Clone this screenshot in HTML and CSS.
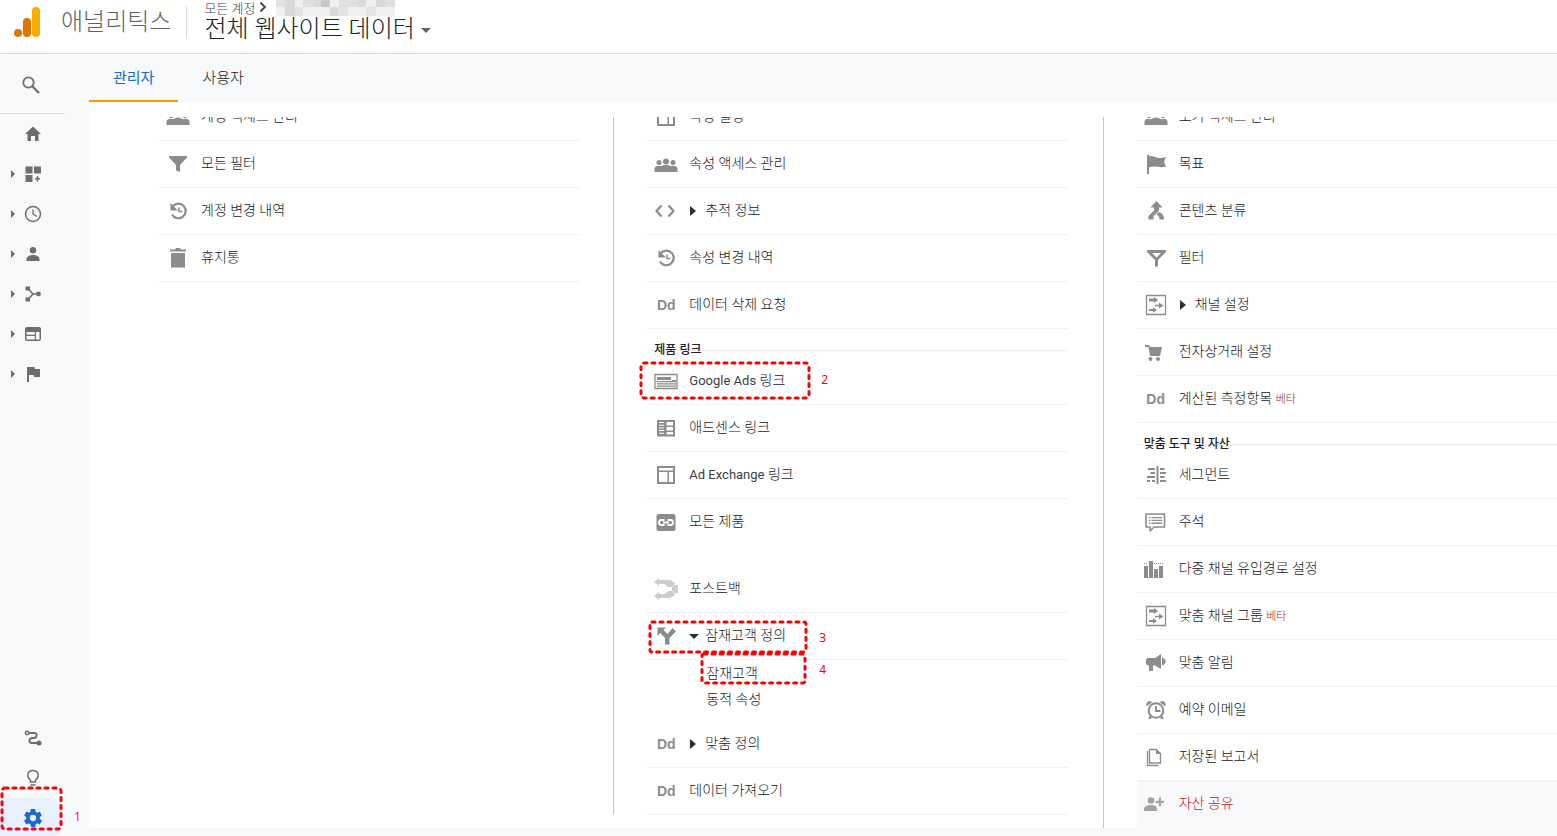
FILE: index.html
```html
<!DOCTYPE html>
<html lang="ko">
<head>
  <meta charset="UTF-8">
  <title>애널리틱스</title>
  <link rel="stylesheet" href="styles.css">
</head>
<body>

  <svg class="sprite" aria-hidden="true">
    <symbol id="i-people" viewBox="0 0 24 24"><circle cx="12" cy="9.500" r="3"/><circle cx="5" cy="10.500" r="2.500"/><circle cx="19" cy="10.500" r="2.500"/><path d="M.5 20v-3c0-2 2-3.200 4-3.200 1 0 2 .2 2.500.5 1-.8 3-1.300 5-1.300s4 .5 5 1.300c.5-.3 1.500-.5 2.500-.5 2 0 4 1.200 4 3.200v3z"/></symbol>
    <symbol id="i-layout" viewBox="0 0 24 24"><path d="M3 3h18v18H3zm2 2v2.500h14V5zm0 4v10h8.500V9zm10 0v10h4V9z" fill-rule="evenodd"/></symbol>
    <symbol id="i-filter" viewBox="0 0 24 24"><path d="M3 4h18v1.500l-7 7.500v7l-4-1.500V13L3 5.500z"/></symbol>
    <symbol id="i-filter-o" viewBox="0 0 24 24"><path d="M3 4h19v2l-8 8v6.500h-3V14L3 6zm5 3 4.500 4.500L17 7z" fill-rule="evenodd"/></symbol>
    <symbol id="i-history" viewBox="0 0 24 24"><path d="M7 7a7.300 7.300 0 1 1-1 8.500" fill="none" stroke="currentColor" stroke-width="2.200"/><path d="M4.500 4v7.500H12z"/><path d="M13 8.500v4h3.500" fill="none" stroke="currentColor" stroke-width="1.500"/></symbol>
    <symbol id="i-trash" viewBox="0 0 24 24"><path d="M4 3.500h5l1-1.500h4l1 1.500h5v2H4zM5 7h14v14.500H5z"/></symbol>
    <symbol id="i-code" viewBox="0 0 24 24"><path d="m7.500 6.500-5 5.500 5 5.500M14.500 6.500l5 5.500-5 5.500" fill="none" stroke="currentColor" stroke-width="2.200"/></symbol>
    <symbol id="i-ads" viewBox="0 0 24 24"><path d="M1 5.500h22v14H1z" fill="none" stroke="currentColor" stroke-width="1.300"/><path d="M3 8h14v3H3zm15 3h4v1h-4zM3 12h19v1.200H3zm0 2.300h19v1.200H3zm0 2.300h19v1.200H3z"/></symbol>
    <symbol id="i-adsense" viewBox="0 0 24 24"><path d="M3 4h18v16.500H3zm9.500 2v3.500H19V6zm0 5v3.500H19V11zm0 5v2.500H19V16zM5 6v1h5V6zm0 2.700v1h5v-1zm0 2.700v1h5v-1zm0 2.700v1h5v-1zm0 2.700v1h5v-1z" fill-rule="evenodd"/></symbol>
    <symbol id="i-link" viewBox="0 0 24 24"><rect x="2.500" y="4" width="19" height="17" rx="2"/><path d="M10.500 10H7.500a2.500 2.500 0 0 0 0 5h3M13.500 10h3a2.500 2.500 0 0 1 0 5h-3M9 12.500h6" fill="none" stroke="#fff" stroke-width="1.800"/></symbol>
    <symbol id="i-postback" viewBox="0 0 24 24"><path d="M0 5 5 1v2h11l5 3-3 4h-4l-3-3H5v2zM0 19l5-4v2h6l3-3h4l3 4-5 3H5v2z"/><circle cx="22" cy="12" r="4.200"/></symbol>
    <symbol id="i-split" viewBox="0 0 24 24"><path d="M3.500 3.500h8.500L9.500 6l4 4 5-6 3.500 3.300-6.500 6.700v6.500h-4.500V14L6.300 9 3.500 12z"/></symbol>
    <symbol id="i-merge" viewBox="0 0 24 24"><path d="m12.500 2 6 6.500H15v3.500l-5.500 5v3.500h-5V17l5.500-5.500v-3H6.500zM15 13c3 1 5 3 5 7.500h-4.500c0-2.500-1-4-3-5z"/></symbol>
    <symbol id="i-flag" viewBox="0 0 24 24"><path d="M3 3l2-.5v2c4-1.500 7 2 11 1.500 2 0 4-.5 6-1l-2 5 2 4.500c-6 2-11-1.500-17 1v6.500H3z"/></symbol>
    <symbol id="i-channel" viewBox="0 0 24 24"><path d="M2.500 2.500h19v19h-19z" fill="none" stroke="currentColor" stroke-width="1.300"/><path d="M5 5.500h5V4l4 3-4 3V8.500H5zM11 11.700h4V9.500l4.500 3-4.500 3v-2.200h-4zM5 16h4v-1.800l4 2.800-4 2.800v-1.800H5z"/></symbol>
    <symbol id="i-cart" viewBox="0 0 24 24"><path d="M1 5h4l1 2h12l-2 9H6L4.500 7H1z"/><circle cx="6.500" cy="19" r="2"/><circle cx="14" cy="19" r="2"/></symbol>
    <symbol id="i-segment" viewBox="0 0 24 24"><path d="M4 6h7M6.500 10H11M3 14h8M3 18h3M16 6h4.500M16 10h6M16 14h4.500M16 18h6M8 18h3" fill="none" stroke="currentColor" stroke-width="1.800"/><path d="M12.500 3h2v18h-2z"/></symbol>
    <symbol id="i-note" viewBox="0 0 24 24"><path d="M2 4h18.500v13H10l-4 4v-4H2z" fill="none" stroke="currentColor" stroke-width="1.600" stroke-linejoin="round"/><path d="M5 7h1.500v1.300H5zm2.500 0h10.500v1.300H7.500zM5 9.800h1.500v1.300H5zm2.500 0h10.500v1.300H7.500zM5 12.600h1.500v1.300H5zm2.500 0h10.500v1.300H7.500z"/></symbol>
    <symbol id="i-bars" viewBox="0 0 24 24"><path d="M0 9h4v12H0zm5-5h4v17H5zm5 8h4v9h-4zm5-3h4v12h-4z"/><path d="M0 6.500h4M10 6.500h9" fill="none" stroke="currentColor" stroke-dasharray="1 1"/></symbol>
    <symbol id="i-horn" viewBox="0 0 24 24"><path d="M2 8.500 3.500 7H11l6-4v15l-6-3.500H9V20H5v-5.500H3.500L2 13zM18 6.500c5 2 5 6 0 8z"/></symbol>
    <symbol id="i-alarm" viewBox="0 0 24 24"><circle cx="12" cy="12.500" r="7.300" fill="none" stroke="currentColor" stroke-width="2"/><path d="M2.500 8.500C1.500 4 5 2 8.500 4zM21.500 8.500c1-4.500-2.500-6.500-6-4.500zM4 21l2-3.500 2 2L6.500 21zM20 21l-2-3.500-2 2 1.500 1.500z"/><path d="M12 8v5h4.500" fill="none" stroke="currentColor" stroke-width="1.800"/></symbol>
    <symbol id="i-docs" viewBox="0 0 24 24"><path d="M5.500 4.500H12l4.500 4v9.500h-11zM3.500 6v14.500h11" fill="none" stroke="currentColor" stroke-width="1.300"/><path d="M12 4v5h5z"/></symbol>
    <symbol id="i-adduser" viewBox="0 0 24 24"><circle cx="7" cy="8.500" r="3.300"/><path d="M0 19v-2c0-3 4-4 7-4s6 1 6 4v2zM15 5.500h2v3.300h3V11h-3v3.300h-2V11h-3.300V8.800H15z"/></symbol>
    <symbol id="i-gear" viewBox="0 0 24 24"><path fill-rule="evenodd" d="M19.400 13c0-.3.100-.6.100-1s0-.7-.1-1l2.100-1.600c.2-.2.200-.4.100-.6l-2-3.500c-.1-.2-.4-.3-.6-.2l-2.500 1c-.5-.4-1.100-.7-1.700-1l-.4-2.600c0-.2-.2-.4-.5-.4h-4c-.2 0-.4.200-.5.400L9.200 5.100c-.6.300-1.200.6-1.700 1L5 5.100c-.2-.1-.5 0-.6.200l-2 3.500c-.1.200-.1.500.1.600L4.600 11c0 .3-.1.700-.1 1s0 .7.100 1l-2.100 1.600c-.2.200-.2.400-.1.600l2 3.500c.1.200.4.300.6.200l2.500-1c.5.400 1.100.7 1.700 1l.4 2.600c0 .2.200.4.500.4h4c.2 0 .5-.2.500-.4l.4-2.600c.6-.3 1.200-.6 1.700-1l2.500 1c.2.100.5 0 .6-.2l2-3.500c.1-.2.100-.5-.1-.6zM12 15.500a3.500 3.500 0 1 1 0-7 3.500 3.500 0 0 1 0 7z"/></symbol>
  </svg>

  <header class="header">
    <svg class="logo" viewBox="0 0 26 30"><rect x="18" y="0" width="8" height="30" rx="4" fill="#f9ab00"/><rect x="9" y="11" width="8" height="19" rx="4" fill="#e37400"/><circle cx="4" cy="26" r="4" fill="#e37400"/></svg>
    <div class="product">애널리틱스</div>
    <div class="account">
      <div class="crumb">
        모든 계정
        <svg class="crumb-arrow" viewBox="0 0 8 10"><path d="M1.500.5 6 5 1.500 9.500" fill="none" stroke="currentColor" stroke-width="1.800"/></svg>
        <svg class="masked" viewBox="0 0 120 18" aria-hidden="true">
          <path fill="#f0f0f1" d="M0 0h119v18H0z"/><path fill="#e5e2e4" d="M0 0h9v9H0zM19 9h8v9h-8zM90 9h10v9H90zM62 9h10v9H62z"/><path fill="#d8dade" d="M9 0h10v9H9zM37 0h8v9h-8zM82 0h8v9h-8z"/><path fill="#c7c8cc" d="M45 0h9v9h-9z"/><path fill="#d7d9dc" d="M9 9h10v9H9zM54 9h8v9h-8zM100 0h9v9h-9z"/><path fill="#e0dfe1" d="M63 0h19v9H63zM109 0h10v9h-10zM27 0h10v9H27z"/>
        </svg>
      </div>
      <button class="view-picker" type="button">전체 웹사이트 데이터 <span class="caret"></span></button>
    </div>
  </header>

  <div class="body">
    <nav class="rail">
      <button class="search" type="button" aria-label="검색"><svg viewBox="0 0 18 18"><circle cx="6.500" cy="6.500" r="5.200" fill="none" stroke="currentColor" stroke-width="1.800"/><path d="m10.500 10.500 6.500 6.500" stroke="currentColor" stroke-width="2.200"/></svg></button>
      <a class="rail-item" href="#" aria-label="홈"><svg viewBox="0 0 18 18"><path d="M9 1.500 1 9h2.500v7H7v-5h4v5h3.500V9H17z"/></svg></a>
      <a class="rail-item has-sub" href="#" aria-label="맞춤설정"><svg viewBox="0 0 18 18"><path d="M1.500 1.500h7v7h-7zm8.500 0h7v7h-7zM1.500 10h7v7h-7zM12.700 11h1.600v2H16v1.600h-1.700v2h-1.600v-2H11V13h1.700z"/></svg></a>
      <a class="rail-item has-sub" href="#" aria-label="실시간"><svg viewBox="0 0 18 18"><circle cx="9" cy="9" r="7.500" fill="none" stroke="currentColor" stroke-width="1.500"/><path d="M9 4.500V9l4 2.500" fill="none" stroke="currentColor" stroke-width="1.300"/></svg></a>
      <a class="rail-item has-sub" href="#" aria-label="잠재고객"><svg viewBox="0 0 18 18"><circle cx="9" cy="5.200" r="3.200"/><path d="M2.500 16v-2c0-2.500 3.500-4 6.500-4s6.500 1.500 6.500 4v2z"/></svg></a>
      <a class="rail-item has-sub" href="#" aria-label="획득"><svg viewBox="0 0 18 18"><path d="M1.500 1.500H6v4H1.500zm0 11H6v4H1.500z"/><circle cx="14.500" cy="9" r="2.400"/><path d="M4 3.500 9 9l-5 5.500M9 9h5" fill="none" stroke="currentColor" stroke-width="1.600"/></svg></a>
      <a class="rail-item has-sub" href="#" aria-label="행동"><svg viewBox="0 0 18 18"><path fill-rule="evenodd" d="M3 2h12q2 0 2 2v10q0 2-2 2H3q-2 0-2-2V4q0-2 2-2zm-.5 5v2.700h8.300V7zm0 4v3.500h8.300V11zM12 7v7.500h3.500V7z"/></svg></a>
      <a class="rail-item has-sub" href="#" aria-label="전환"><svg viewBox="0 0 18 18"><path d="M3 2h7.500l.5 2h5v8h-6l-.5-2H5v7H3z"/></svg></a>
      <div class="rail-bottom">
        <a class="rail-item" href="#" aria-label="기여 분석"><svg viewBox="0 0 18 18"><circle cx="3" cy="4" r="1.700" fill="none" stroke="currentColor" stroke-width="1.500"/><circle cx="15" cy="14" r="2.500"/><path d="M4.500 4H10c3.500 0 3.500 4.500 0 5H8c-3.500.5-3.500 5 0 5h6" fill="none" stroke="currentColor" stroke-width="1.800"/></svg></a>
        <a class="rail-item" href="#" aria-label="탐색"><svg viewBox="0 0 18 18"><path d="M6.500 13v-2C2 8 3.500 1.500 9 1.500S16 8 11.500 11v2zM6.500 16h5" fill="none" stroke="currentColor" stroke-width="1.500"/></svg></a>
        <a class="rail-item active" href="#" aria-label="관리"><svg viewBox="2 2 20 20"><use href="#i-gear" width="24" height="24"/></svg></a>
        <svg class="mark mark-1"><rect x="2" y="2" width="59" height="41" rx="3"/></svg>
        <span class="step step-1">1</span>
      </div>
    </nav>

    <main class="main">
      <div class="tabs">
        <a class="tab active" href="#">관리자</a>
        <a class="tab" href="#">사용자</a>
      </div>

      <div class="panel">
        <section class="column">
          <ul class="menu">
            <li class="row"><svg class="icon"><use href="#i-people"/></svg><a href="#">계정 액세스 관리</a></li>
            <li class="row"><svg class="icon"><use href="#i-filter"/></svg><a href="#">모든 필터</a></li>
            <li class="row"><svg class="icon"><use href="#i-history"/></svg><a href="#">계정 변경 내역</a></li>
            <li class="row"><svg class="icon"><use href="#i-trash"/></svg><a href="#">휴지통</a></li>
          </ul>
        </section>

        <section class="column">
          <ul class="menu">
            <li class="row"><svg class="icon"><use href="#i-layout"/></svg><a href="#">속성 설정</a></li>
            <li class="row"><svg class="icon"><use href="#i-people"/></svg><a href="#">속성 액세스 관리</a></li>
            <li class="row"><svg class="icon"><use href="#i-code"/></svg><span class="arrow"></span><a href="#">추적 정보</a></li>
            <li class="row"><svg class="icon"><use href="#i-history"/></svg><a href="#">속성 변경 내역</a></li>
            <li class="row"><span class="icon dd">Dd</span><a href="#">데이터 삭제 요청</a></li>
            <li class="group">제품 링크</li>
            <li class="row"><svg class="icon"><use href="#i-ads"/></svg><a href="#"><span class="latin">Google Ads</span> 링크</a>
              <svg class="mark mark-2"><rect x="2" y="2" width="168" height="35" rx="3"/></svg><span class="step step-2">2</span></li>
            <li class="row"><svg class="icon"><use href="#i-adsense"/></svg><a href="#">애드센스 링크</a></li>
            <li class="row"><svg class="icon"><use href="#i-layout"/></svg><a href="#"><span class="latin">Ad Exchange</span> 링크</a></li>
            <li class="row last"><svg class="icon"><use href="#i-link"/></svg><a href="#">모든 제품</a></li>
            <li class="row"><svg class="icon pale"><use href="#i-postback"/></svg><a href="#">포스트백</a></li>
            <li class="row"><svg class="icon"><use href="#i-split"/></svg><span class="arrow open"></span><a href="#">잠재고객 정의</a>
              <svg class="mark mark-3"><rect x="2" y="2" width="156" height="30" rx="2"/></svg><span class="step step-3">3</span></li>
            <li class="sub">
              <a href="#">잠재고객</a>
              <a href="#">동적 속성</a>
              <svg class="mark mark-4"><rect x="2" y="2" width="103" height="29" rx="2"/></svg><span class="step step-4">4</span>
            </li>
            <li class="row"><span class="icon dd">Dd</span><span class="arrow"></span><a href="#">맞춤 정의</a></li>
            <li class="row"><span class="icon dd">Dd</span><a href="#">데이터 가져오기</a></li>
          </ul>
        </section>

        <section class="column">
          <ul class="menu">
            <li class="row"><svg class="icon"><use href="#i-people"/></svg><a href="#">보기 액세스 관리</a></li>
            <li class="row"><svg class="icon"><use href="#i-flag"/></svg><a href="#">목표</a></li>
            <li class="row"><svg class="icon"><use href="#i-merge"/></svg><a href="#">콘텐츠 분류</a></li>
            <li class="row"><svg class="icon"><use href="#i-filter-o"/></svg><a href="#">필터</a></li>
            <li class="row"><svg class="icon"><use href="#i-channel"/></svg><span class="arrow"></span><a href="#">채널 설정</a></li>
            <li class="row"><svg class="icon"><use href="#i-cart"/></svg><a href="#">전자상거래 설정</a></li>
            <li class="row"><span class="icon dd">Dd</span><a href="#">계산된 측정항목 <small>베타</small></a></li>
            <li class="group">맞춤 도구 및 자산</li>
            <li class="row"><svg class="icon"><use href="#i-segment"/></svg><a href="#">세그먼트</a></li>
            <li class="row"><svg class="icon"><use href="#i-note"/></svg><a href="#">주석</a></li>
            <li class="row"><svg class="icon"><use href="#i-bars"/></svg><a href="#">다중 채널 유입경로 설정</a></li>
            <li class="row"><svg class="icon"><use href="#i-channel"/></svg><a href="#">맞춤 채널 그룹 <small>베타</small></a></li>
            <li class="row"><svg class="icon"><use href="#i-horn"/></svg><a href="#">맞춤 알림</a></li>
            <li class="row"><svg class="icon"><use href="#i-alarm"/></svg><a href="#">예약 이메일</a></li>
            <li class="row"><svg class="icon"><use href="#i-docs"/></svg><a href="#">저장된 보고서</a></li>
            <li class="row selected"><svg class="icon"><use href="#i-adduser"/></svg><a href="#">자산 공유</a></li>
          </ul>
        </section>
      </div>
    </main>
  </div>

</body>
</html>
```
FILE: styles.css
```css
body {
  margin: 0;
  height: 100vh;
  overflow: hidden;
  background: #f8f9fb;
  color: #202124;
  font-family: Roboto, "Noto Sans CJK KR", sans-serif;
  font-size: 14px;
  font-weight: 300;
}
a {
  color: inherit;
  text-decoration: none;
}
svg {
  fill: currentColor;
}
.sprite {
  position: absolute;
  width: 0;
  height: 0;
}

/* header */
.header {
  display: flex;
  height: 53px;
  background: #fff;
  border-bottom: 1px solid #dadce0;
}
.logo {
  width: 26px;
  height: 30px;
  margin: 7px 21px 0 14px;
}
.product {
  margin-top: 4px;
  padding-right: 15px;
  color: #5f6368;
  font-size: 24px;
  line-height: 36px;
}
.account {
  margin-top: 6px;
  height: 32px;
  border-left: 1px solid #dadce0;
  padding-left: 17px;
}
.crumb {
  display: flex;
  align-items: center;
  height: 16px;
  margin-top: -7px;
  color: #3c4043;
  font-size: 13px;
}
.crumb-arrow {
  width: 8px;
  height: 10px;
  margin-left: 4px;
}
.masked {
  width: 120px;
  height: 18px;
  margin-left: 9px;
}
.view-picker {
  display: flex;
  align-items: center;
  gap: 6px;
  border: 0;
  padding: 0;
  background: none;
  color: #202124;
  font: 300 24px/28px Roboto, "Noto Sans CJK KR", sans-serif;
}
.caret {
  border: 5px solid transparent;
  border-top-color: #5f6368;
  border-bottom: 0;
  margin-top: 2px;
}

/* left rail */
.body {
  display: flex;
}
.rail {
  display: flex;
  flex-direction: column;
  width: 65px;
  height: calc(100vh - 52px);
  margin-right: 24px;
  color: #6e6e6e;
}
.search {
  height: 60px;
  border: 0;
  border-bottom: 1px solid #dadce0;
  padding: 2px 0 0 22px;
  background: none;
  color: #6e6e6e;
  text-align: left;
}
.rail svg {
  display: block;
  width: 18px;
  height: 18px;
}
.rail-item {
  display: flex;
  align-items: center;
  height: 40px;
  padding-left: 24px;
}
.has-sub {
  padding-left: 11px;
}
.has-sub::before {
  content: "";
  border: 4px solid transparent;
  border-left-color: #6e6e6e;
  border-right: 0;
  margin-right: 9px;
}
.rail-item.active {
  background: #e8f0fe;
  border-radius: 0 20px 20px 0;
  color: #1967d2;
}
.rail-bottom {
  position: relative;
  margin-top: auto;
}

/* tabs */
.main {
  flex: 1;
  min-width: 0;
}
.tabs {
  display: flex;
  height: 48px;
}
.tab {
  height: 46px;
  padding: 0 24px;
  border-bottom: 2px solid transparent;
  font-size: 15px;
  line-height: 48px;
}
.tab.active {
  border-color: #ff9800;
  color: #1967d2;
  font-weight: 400;
}

/* settings columns */
.panel {
  display: flex;
  align-items: flex-start;
  padding: 15px 0 0 36px;
  background: #fff;
}
.column {
  flex: 1 1 0;
  min-width: 0;
  overflow: hidden;
  padding: 0 34px;
}
.column + .column {
  border-left: 1px solid #c4c4c4;
  padding: 0 35px 0 33px;
}
.column:last-child {
  padding-right: 0;
}
.menu {
  list-style: none;
  margin: -23px 0 0;
  padding: 0;
}
.row {
  position: relative;
  display: flex;
  align-items: center;
  height: 46px;
  padding-left: 7px;
  border-bottom: 1px solid #f1f1f1;
}
.row a {
  padding-bottom: 4px;
}
.row.last {
  border-color: transparent;
  margin-bottom: 20px;
}
.row.selected {
  background: #f8f9fb;
  border-color: #f8f9fb;
  color: #c5221f;
}
.icon {
  flex: none;
  width: 24px;
  height: 24px;
  margin-right: 11px;
  color: #8c8c8c;
}
.icon.pale {
  color: #ccc;
}
.selected .icon {
  color: #a3a3a3;
}
.dd {
  font: bold 14px/24px "Liberation Sans", sans-serif;
  text-align: center;
}
.latin {
  color: #3c4043;
  font-size: 13px;
  font-weight: 400;
}
.row small {
  color: #a52714;
  font-size: 11px;
}
.arrow {
  border: 5px solid transparent;
  border-left: 6px solid #263238;
  border-right: 0;
  margin: 0 9px 0 1px;
}
.arrow.open {
  border: 5px solid transparent;
  border-top-color: #263238;
  border-bottom: 0;
  margin: 0 6px 0 0;
}
.group {
  padding: 14px 0 0 7px;
  background: linear-gradient(#eee, #eee) no-repeat 0 21px / 100% 1px;
  font-size: 12px;
  font-weight: 500;
  line-height: 15px;
}
.sub {
  position: relative;
  padding: 0 0 9px 59px;
}
.sub a {
  display: block;
  line-height: 26px;
}
.sub a + a {
  padding-bottom: 0;
}

/* step marks */
.mark {
  position: absolute;
  overflow: visible;
}
.mark rect {
  fill: none;
  stroke: #f00;
  stroke-width: 3;
  stroke-linecap: round;
  stroke-dasharray: 3 5;
}
.step {
  position: absolute;
  color: #f00;
  font: 12px/16px "Noto Sans", sans-serif;
}
.rail .mark-1 {
  left: 0;
  top: 68px;
  width: 63px;
  height: 45px;
}
.step-1 {
  left: 74px;
  top: 91px;
  color: #f0c;
}
.mark-2 {
  left: -8px;
  top: 3px;
  width: 172px;
  height: 39px;
}
.step-2 {
  left: 174px;
  top: 14px;
}
.mark-3 {
  left: 1px;
  top: 7px;
  width: 160px;
  height: 34px;
}
.step-3 {
  left: 172px;
  top: 17px;
}
.mark-4 {
  left: 53px;
  top: -8px;
  width: 107px;
  height: 33px;
}
.step-4 {
  left: 172px;
  top: 2px;
}
```
